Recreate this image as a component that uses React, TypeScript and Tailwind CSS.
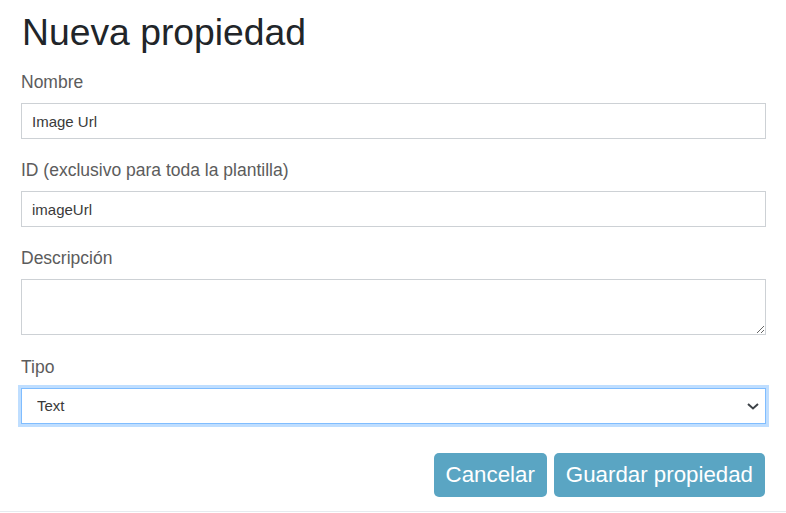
import React from "react";

const Label = ({children}: {children: React.ReactNode}) => (
    <label className="block text-[17.5px] leading-[22px] text-[#5c5c5c] mb-[10px]">{children}</label>
);

const inputClass = "block w-full h-[36px] border border-[#cdd1d5] bg-white px-[10px] text-[15px] text-[#3a3a3a] outline-none";

export default function App() {
    return (
        <div className="w-[786px] h-[513px] bg-white" style={{fontFamily: "'Liberation Sans', Arial, sans-serif"}}>
            <div className="pl-[21px] pr-[20px] pt-[11px] pb-[14px] border-b border-[#e6ebef]">
                <h1 className="text-[37.3px] leading-[43px] text-[#212529] mb-[17px] pl-[1px]">Nueva propiedad</h1>

                <div className="mb-5">
                    <Label>Nombre</Label>
                    <input className={inputClass} defaultValue="Image Url"/>
                </div>

                <div className="mb-5">
                    <Label>ID (exclusivo para toda la plantilla)</Label>
                    <input className={inputClass} defaultValue="imageUrl"/>
                </div>

                <div className="mb-[21px]">
                    <Label>Descripción</Label>
                    <textarea className="block w-full h-[56px] border border-[#cdd1d5] bg-white px-[10px] py-2 text-[15px] outline-none resize-y"/>
                </div>

                <div>
                    <Label>Tipo</Label>
                    <div className="relative">
                        <select
                            className="block w-full h-[36px] appearance-none border border-[#80bdff] shadow-[0_0_0_3px_rgba(0,123,255,0.25)] bg-white pl-[15px] text-[15px] text-[#3a3a3a] outline-none"
                            defaultValue="text"
                        >
                            <option value="text">Text</option>
                        </select>
                        <svg className="absolute right-[7px] top-[15px] pointer-events-none" width="12" height="7" viewBox="0 0 12 7" fill="none">
                            <polyline points="1,1 6,5.5 11,1" stroke="#3d4247" strokeWidth="2"/>
                        </svg>
                    </div>
                </div>

                <div className="flex justify-end gap-[7px] mt-[29px] pr-[1px]">
                    <button className="h-[44px] px-[12px] rounded-[5px] bg-[#5aa5c3] text-white text-[22.3px]">Cancelar</button>
                    <button className="h-[44px] px-[12px] rounded-[5px] bg-[#5aa5c3] text-white text-[22.3px]">Guardar propiedad</button>
                </div>
            </div>
        </div>
    );
}
